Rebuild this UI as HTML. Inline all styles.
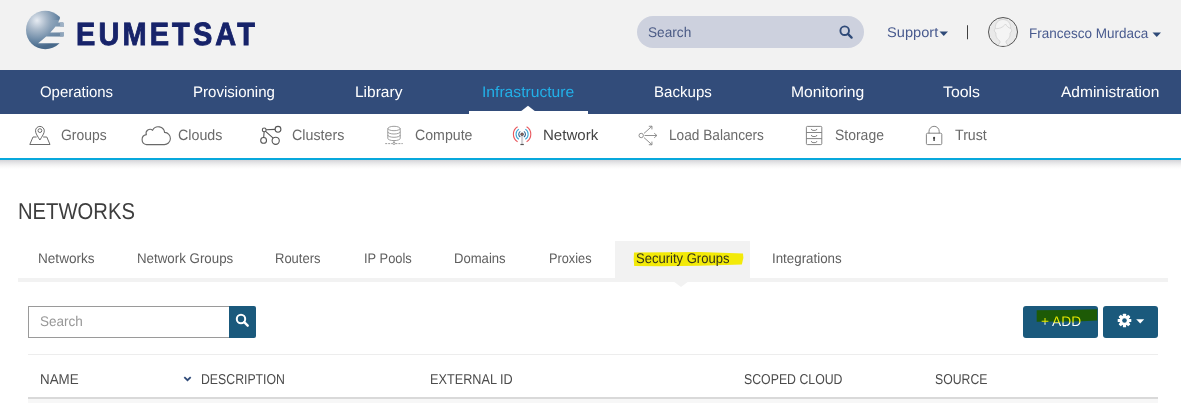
<!DOCTYPE html>
<html lang="en">
<head>
<meta charset="utf-8">
<title>Networks - Security Groups</title>
<style>
html,body{margin:0;padding:0;}
body{width:1181px;height:403px;overflow:hidden;background:#fff;position:relative;font-family:"Liberation Sans",sans-serif;}
.abs{position:absolute;}
.t{position:absolute;white-space:pre;line-height:1;transform-origin:0 50%;text-rendering:geometricPrecision;}
#hdr{left:0;top:0;width:1181px;height:70px;background:#f2f2f2;}
#nav{left:0;top:70px;width:1181px;height:43.5px;background:#324c7a;}
#navnotch{left:469px;top:110.6px;width:119px;height:4px;background:#fff;}
#sub{left:0;top:113.5px;width:1181px;height:44.5px;background:#fff;border-bottom:2px solid #08a8dc;}
#subsh{left:0;top:160px;width:1181px;height:9px;background:linear-gradient(#d4d4d8 0,#e6e6e8 30%,#f6f6f6 65%,#fff 100%);}
#pill{left:637px;top:16px;width:227px;height:32px;border-radius:16px;background:#cdd1de;}
#avatar{left:988px;top:17px;width:28px;height:28px;border-radius:50%;border:1px solid #555;background:#e9e9e9;overflow:hidden;}
#tabbar{left:18px;top:278px;width:1150px;height:4px;background:#f2f2f2;}
#tabactive{left:615px;top:241px;width:135px;height:38px;background:#f2f2f2;}
#sinput{left:28px;top:306px;width:200px;height:30px;border:1px solid #9a9a9a;border-right:none;background:#fff;}
#sbtn{left:229px;top:306px;width:27px;height:32px;background:#1a597c;border-radius:0 2px 2px 0;}
#addbtn{left:1023px;top:306px;width:75px;height:32px;background:#1a597c;border-radius:3px;}
#gearbtn{left:1103px;top:306px;width:55px;height:32px;background:#1a597c;border-radius:3px;}
#thtop{left:28px;top:354px;width:1130px;height:1px;background:#ededed;}
#thbot{left:28px;top:397px;width:1130px;height:2px;background:#d9d9d9;}
#row1{left:28px;top:399px;width:1130px;height:4px;background:#f7f7f7;}
</style>
</head>
<body>
<div id="hdr" class="abs"></div>
<div id="nav" class="abs"></div>
<div id="sub" class="abs"></div>
<div id="subsh" class="abs"></div>
<div id="navnotch" class="abs"></div>
<svg class="abs" style="left:519.5px;top:104.6px" width="16" height="8" viewBox="0 0 16 8"><path d="M0 7 L8 0.8 L16 7 Z" fill="#fff"/></svg>

<!-- logo globe -->
<svg class="abs" style="left:24px;top:8px" width="44" height="44" viewBox="24 8 44 44">
  <defs>
    <radialGradient id="gl" cx="37" cy="20.5" r="27" gradientUnits="userSpaceOnUse">
      <stop offset="0" stop-color="#e6ebf2"/>
      <stop offset="0.35" stop-color="#a9b9ca"/>
      <stop offset="0.75" stop-color="#6a88a5"/>
      <stop offset="1" stop-color="#48698a"/>
    </radialGradient>
    <linearGradient id="fd" x1="50" y1="0" x2="64" y2="0" gradientUnits="userSpaceOnUse"><stop offset="0" stop-color="#fff" stop-opacity="0"/><stop offset="1" stop-color="#fff" stop-opacity="0.28"/></linearGradient>
    <clipPath id="gc">
      <path d="M20 5 L60.6 5 L60.6 16 Q58 29 33 47 L20 52 Z"/>
      <rect x="50" y="22.4" width="14" height="4.1"/>
      <rect x="44" y="32.5" width="20" height="4"/>
      <rect x="30" y="43.2" width="30" height="8"/>
    </clipPath>
  </defs>
  <g clip-path="url(#gc)">
    <circle cx="45.3" cy="30" r="19.3" fill="url(#gl)"/>
    <rect x="60" y="22.4" width="4" height="4.1" fill="#7f98b2"/>
    <rect x="60" y="32.5" width="4" height="4" fill="#6b89a6"/>
    <rect x="50" y="20" width="14" height="18" fill="url(#fd)"/>
  </g>
</svg>

<div id="pill" class="abs"></div>
<!-- header search icon -->
<svg class="abs" style="left:838px;top:24px" width="16" height="16" viewBox="0 0 16 16"><circle cx="6.7" cy="6.7" r="4.3" fill="none" stroke="#2f4a78" stroke-width="1.9"/><path d="M9.9 9.9 L13.6 13.6" stroke="#2f4a78" stroke-width="2.3" stroke-linecap="round"/></svg>
<!-- carets -->
<svg class="abs" style="left:939.4px;top:30.6px" width="10" height="6" viewBox="0 0 10 6"><path d="M0.5 0.5 L9 0.5 L4.75 5 Z" fill="#2f4a78"/></svg>
<svg class="abs" style="left:1152px;top:32px" width="10" height="6" viewBox="0 0 10 6"><path d="M0.5 0.5 L9 0.5 L4.75 5 Z" fill="#2f4a78"/></svg>
<div id="avatar" class="abs">
<svg width="28" height="28" viewBox="0 0 28 28" fill="none" stroke="#d2d2d2" stroke-width="0.8"><path d="M7.5 28 C9 26.8 11.4 26 11 23 C7.5 21 6.5 17.5 7 15 C5 14 5 11.5 6.3 10.5 C6 5 9.5 1.5 14 1.5 C18.5 1.5 22 5 21.7 10.5 C23 11.5 23 14 21 15 C21.5 17.5 20.5 21 17 23 C16.6 26 19 26.8 20.5 28 Z" fill="#f4f4f4"/><path d="M6.3 10.5 C10 11 14 9.5 16.5 6 C17.5 8 19.5 10 21.7 10.5"/></svg>
</div>

<!-- subnav icons -->
<!-- groups -->
<svg class="abs" style="left:28px;top:124px" width="24" height="23" viewBox="28 124 24 23" fill="none" stroke="#6b6b6b" stroke-width="1">
  <path d="M39.9 140 C37.5 136 35.5 133.5 35.5 130.8 A4.4 4.4 0 0 1 44.3 130.8 C44.3 133.5 42.3 136 39.9 140 Z"/>
  <circle cx="39.9" cy="130.6" r="1.9"/>
  <path d="M36.6 137 L33 137 L29.8 144.5 L50 144.5 L46.8 137 L43.2 137"/>
</svg>
<!-- clouds -->
<svg class="abs" style="left:140px;top:124px" width="32" height="23" viewBox="140 124 32 23" fill="none" stroke="#696969" stroke-width="1.1">
  <path d="M146.6 144.6 L164 144.6 A6.1 6.1 0 0 0 164.6 132.4 A6.4 6.4 0 0 0 152.6 130.2 A4 4 0 0 0 146.3 134.6 A5.05 5.05 0 0 0 146.6 144.6 Z"/>
</svg>
<!-- clusters -->
<svg class="abs" style="left:258px;top:124px" width="26" height="23" viewBox="258 124 26 23" fill="none" stroke="#555" stroke-width="1.1">
  <circle cx="264.2" cy="129.9" r="1.9"/>
  <circle cx="278" cy="129.3" r="2.9"/>
  <circle cx="263.6" cy="140.4" r="2.9"/>
  <circle cx="275.7" cy="140.8" r="3.6"/>
  <path d="M266.1 129.8 L275.1 129.4 M264.1 131.8 L263.7 137.5 M265.6 131.3 L273.2 138.2"/>
</svg>
<!-- compute -->
<svg class="abs" style="left:383px;top:124px" width="22" height="23" viewBox="383 124 22 23" fill="none" stroke="#8c8c8c" stroke-width="0.85">
  <ellipse cx="394" cy="128.5" rx="6" ry="2.2"/>
  <path d="M387.8 128.4 L387.8 138.4 A6.2 2.2 0 0 0 400.2 138.4 L400.2 128.4"/>
  <path d="M387.8 131.8 A6.2 2.2 0 0 0 400.2 131.8 M387.8 135.1 A6.2 2.2 0 0 0 400.2 135.1"/>
  <path d="M385.2 143.6 L392.6 143.6 M395.4 143.6 L402.8 143.6" stroke-dasharray="2 1"/>
  <circle cx="394" cy="143.4" r="1.1"/>
  <path d="M394 140.6 L394 142.3"/>
</svg>
<!-- network -->
<svg class="abs" style="left:509.9px;top:123.9px" width="24" height="24" viewBox="510 123 24 24" fill="none" stroke-width="1.1">
  <path d="M517.6 125.7 A8.8 8.8 0 0 0 517.6 140.7 M526.6 125.7 A8.8 8.8 0 0 1 526.6 140.7" stroke="#e8585e"/>
  <path d="M518.9 128.1 A6 6 0 0 0 518.9 138.3 M525.3 128.1 A6 6 0 0 1 525.3 138.3" stroke="#3fa9d8"/>
  <path d="M520.3 130.4 A3.3 3.3 0 0 0 520.3 136 M523.9 130.4 A3.3 3.3 0 0 1 523.9 136" stroke="#2f6490"/>
  <path d="M522.1 134 L522.1 142.9" stroke="#d2d2d6" stroke-width="2.1"/>
  <circle cx="522.1" cy="133.2" r="1.7" fill="#555" stroke="none"/>
  <circle cx="522.1" cy="133.2" r="0.6" fill="#e26a6a" stroke="none"/>
  <path d="M520.4 143.5 L523.8 143.5" stroke="#555" stroke-width="1.2"/>
</svg>
<!-- load balancers -->
<svg class="abs" style="left:636px;top:124px" width="24" height="23" viewBox="636 124 24 23" fill="none" stroke="#858585" stroke-width="0.9">
  <circle cx="641.2" cy="135.5" r="2.2"/>
  <path d="M644.6 135.5 L656.8 135.5 M654.2 133.2 L656.9 135.5 L654.2 137.8"/>
  <path d="M644 133.4 L651.8 126.4 M648.8 126.3 L652 126.2 L651.9 129.4"/>
  <path d="M644 137.6 L651.8 144.6 M648.8 144.7 L652 144.8 L651.9 141.6"/>
</svg>
<!-- storage -->
<svg class="abs" style="left:804px;top:124px" width="20" height="23" viewBox="804 124 20 23" fill="none" stroke="#777" stroke-width="0.9">
  <rect x="806.4" y="126.4" width="15.4" height="18.2" rx="1"/>
  <path d="M806.4 132.5 L821.8 132.5 M806.4 138.6 L821.8 138.6"/>
  <path d="M811.3 128.9 Q811.5 130.4 813 130.4 L815.2 130.4 Q816.7 130.4 816.9 128.9 M811.3 135.0 Q811.5 136.5 813 136.5 L815.2 136.5 Q816.7 136.5 816.9 135.0 M811.3 141.1 Q811.5 142.6 813 142.6 L815.2 142.6 Q816.7 142.6 816.9 141.1"/>
</svg>
<!-- trust -->
<svg class="abs" style="left:924px;top:124px" width="20" height="23" viewBox="924 124 20 23" fill="none" stroke="#777" stroke-width="0.9">
  <rect x="926.4" y="133.2" width="15.4" height="11.4" rx="1.2"/>
  <path d="M929 133.2 L929 131.4 A5.1 5.1 0 0 1 939.2 131.4 L939.2 133.2"/>
  <circle cx="934.1" cy="137.9" r="1.1" fill="#444" stroke="none"/><path d="M934.1 138 L934.1 141" stroke="#444" stroke-width="1.4"/>
</svg>

<!-- tabs -->
<div id="tabbar" class="abs"></div>
<div id="tabactive" class="abs"></div>
<svg class="abs" style="left:673px;top:281px" width="16" height="7" viewBox="0 0 16 7"><path d="M0 0 L16 0 L8 6 Z" fill="#f2f2f2"/></svg>
<!-- yellow marker -->
<svg class="abs" style="left:630px;top:249px" width="118" height="20" viewBox="630 249 118 20"><path d="M634 252.6 L700 252 L743 253.6 L743.4 258 L741.8 264.6 L700 265.8 L660 266.2 L634.2 265.9 L633.7 259 Z" fill="#f3ea08"/></svg>

<!-- search -->
<div id="sinput" class="abs"></div>
<div id="sbtn" class="abs"></div>
<svg class="abs" style="left:234px;top:312px" width="16" height="16" viewBox="0 0 16 16"><circle cx="7" cy="7" r="4.2" fill="none" stroke="#fff" stroke-width="2"/><path d="M10.2 10.2 L13.7 13.7" stroke="#fff" stroke-width="2.4" stroke-linecap="round"/></svg>

<!-- buttons -->
<div id="addbtn" class="abs"></div>
<svg class="abs" style="left:1035px;top:307px" width="64" height="16" viewBox="1035 307 64 16"><path d="M1036.7 310.3 L1070 309.9 L1097.2 309.2 L1097.2 320.6 L1082 321.2 L1036.7 321.8 Z" fill="#1d5a06"/></svg>
<div id="gearbtn" class="abs"></div>
<!-- gear -->
<svg class="abs" style="left:1116.5px;top:312.9px" width="15" height="15" viewBox="-7.5 -7.5 15 15">
  <g fill="#fff">
    <circle r="5.1"/>
    <g id="teeth">
      <rect x="-1.6" y="-6.8" width="3.2" height="13.6" rx="0.5"/>
      <rect x="-1.6" y="-6.8" width="3.2" height="13.6" rx="0.5" transform="rotate(45)"/>
      <rect x="-1.6" y="-6.8" width="3.2" height="13.6" rx="0.5" transform="rotate(90)"/>
      <rect x="-1.6" y="-6.8" width="3.2" height="13.6" rx="0.5" transform="rotate(135)"/>
    </g>
  </g>
  <circle r="2.3" fill="#1a597c"/>
</svg>
<svg class="abs" style="left:1135.8px;top:318.8px" width="9" height="5" viewBox="0 0 9 5"><path d="M0.2 0.2 L8.2 0.2 L4.2 4.4 Z" fill="#fff"/></svg>

<!-- table header -->
<div id="thtop" class="abs"></div>
<div id="thbot" class="abs"></div>
<div id="row1" class="abs"></div>
<svg class="abs" style="left:183px;top:375px" width="9" height="8" viewBox="0 0 9 8"><path d="M1.3 2.2 L4.5 5.2 L7.7 2.2" fill="none" stroke="#2f4a78" stroke-width="1.8"/></svg>

<span class="t" style="left:75.65px;top:17.6px;font-size:32.2px;color:#17236a;font-weight:700;letter-spacing:3.5px;transform:scaleX(0.8980);-webkit-text-stroke:0.9px #17236a;">EUMETSAT</span>
<span class="t" style="left:648.18px;top:25.1px;font-size:14px;color:#4a5a85;transform:scaleX(0.9759);">Search</span>
<span class="t" style="left:887.43px;top:25.1px;font-size:14px;color:#485a8e;transform:scaleX(1.0445);">Support</span>
<span class="t" style="left:966.00px;top:23.9px;font-size:15px;color:#333;transform:scaleX(0.7680);">|</span>
<span class="t" style="left:1028.56px;top:26.1px;font-size:14px;color:#485a8e;transform:scaleX(0.9634);">Francesco Murdaca</span>
<span class="t" style="left:40.20px;top:85.1px;font-size:15.3px;color:#fff;transform:scaleX(0.9764);">Operations</span>
<span class="t" style="left:193.47px;top:85.1px;font-size:15.3px;color:#fff;transform:scaleX(0.9834);">Provisioning</span>
<span class="t" style="left:355.01px;top:85.1px;font-size:15.3px;color:#fff;transform:scaleX(1.0135);">Library</span>
<span class="t" style="left:481.56px;top:85.1px;font-size:15.3px;color:#22b0e8;transform:scaleX(1.0231);">Infrastructure</span>
<span class="t" style="left:654.08px;top:85.1px;font-size:15.3px;color:#fff;transform:scaleX(0.9854);">Backups</span>
<span class="t" style="left:790.95px;top:85.1px;font-size:15.3px;color:#fff;transform:scaleX(1.0264);">Monitoring</span>
<span class="t" style="left:943.28px;top:85.1px;font-size:15.3px;color:#fff;transform:scaleX(1.0372);">Tools</span>
<span class="t" style="left:1061.04px;top:85.1px;font-size:15.3px;color:#fff;transform:scaleX(1.0140);">Administration</span>
<span class="t" style="left:61.02px;top:127.9px;font-size:15px;color:#6a6a6a;transform:scaleX(0.9277);">Groups</span>
<span class="t" style="left:177.96px;top:127.9px;font-size:15px;color:#6a6a6a;transform:scaleX(0.9512);">Clouds</span>
<span class="t" style="left:291.76px;top:127.9px;font-size:15px;color:#6a6a6a;transform:scaleX(0.9522);">Clusters</span>
<span class="t" style="left:414.76px;top:127.9px;font-size:15px;color:#6a6a6a;transform:scaleX(0.9444);">Compute</span>
<span class="t" style="left:543.08px;top:127.9px;font-size:15px;color:#444;transform:scaleX(1.0038);">Network</span>
<span class="t" style="left:669.13px;top:127.9px;font-size:15px;color:#6a6a6a;transform:scaleX(0.9109);">Load Balancers</span>
<span class="t" style="left:835.23px;top:127.9px;font-size:15px;color:#6a6a6a;transform:scaleX(0.9310);">Storage</span>
<span class="t" style="left:955.41px;top:127.9px;font-size:15px;color:#6a6a6a;transform:scaleX(0.9445);">Trust</span>
<span class="t" style="left:17.59px;top:200.2px;font-size:24px;color:#3d3d3d;transform:scale(0.8430,0.96);">NETWORKS</span>
<span class="t" style="left:37.72px;top:251.1px;font-size:14px;color:#5e5e5e;transform:scaleX(0.9699);">Networks</span>
<span class="t" style="left:136.97px;top:251.1px;font-size:14px;color:#5e5e5e;transform:scaleX(0.9513);">Network Groups</span>
<span class="t" style="left:275.44px;top:251.1px;font-size:14px;color:#5e5e5e;transform:scaleX(0.9285);">Routers</span>
<span class="t" style="left:364.10px;top:251.1px;font-size:14px;color:#5e5e5e;transform:scaleX(0.9214);">IP Pools</span>
<span class="t" style="left:454.44px;top:251.1px;font-size:14px;color:#5e5e5e;transform:scaleX(0.9343);">Domains</span>
<span class="t" style="left:549.48px;top:251.1px;font-size:14px;color:#5e5e5e;transform:scaleX(0.9121);">Proxies</span>
<span class="t" style="left:636.43px;top:251.1px;font-size:14px;color:#33331a;transform:scaleX(0.9310);">Security Groups</span>
<span class="t" style="left:772.04px;top:251.1px;font-size:14px;color:#5e5e5e;transform:scaleX(0.9528);">Integrations</span>
<span class="t" style="left:39.60px;top:314.1px;font-size:14px;color:#969696;transform:scaleX(0.9657);">Search</span>
<span class="t" style="left:1040.68px;top:314.0px;font-size:14px;color:transparent;transform:scaleX(0.9830);background:linear-gradient(#f0f000 0,#f0f000 58%,#fff 66%,#fff 100%);-webkit-background-clip:text;background-clip:text;">+ ADD</span>
<span class="t" style="left:39.54px;top:372.9px;font-size:14.3px;color:#4c4c4c;transform:scaleX(0.9346);">NAME</span>
<span class="t" style="left:200.59px;top:372.9px;font-size:14.3px;color:#4c4c4c;transform:scaleX(0.8593);">DESCRIPTION</span>
<span class="t" style="left:429.52px;top:372.9px;font-size:14.3px;color:#4c4c4c;transform:scaleX(0.8872);">EXTERNAL ID</span>
<span class="t" style="left:743.53px;top:372.9px;font-size:14.3px;color:#4c4c4c;transform:scaleX(0.8610);">SCOPED CLOUD</span>
<span class="t" style="left:934.53px;top:372.9px;font-size:14.3px;color:#4c4c4c;transform:scaleX(0.8568);">SOURCE</span>
</body>
</html>
